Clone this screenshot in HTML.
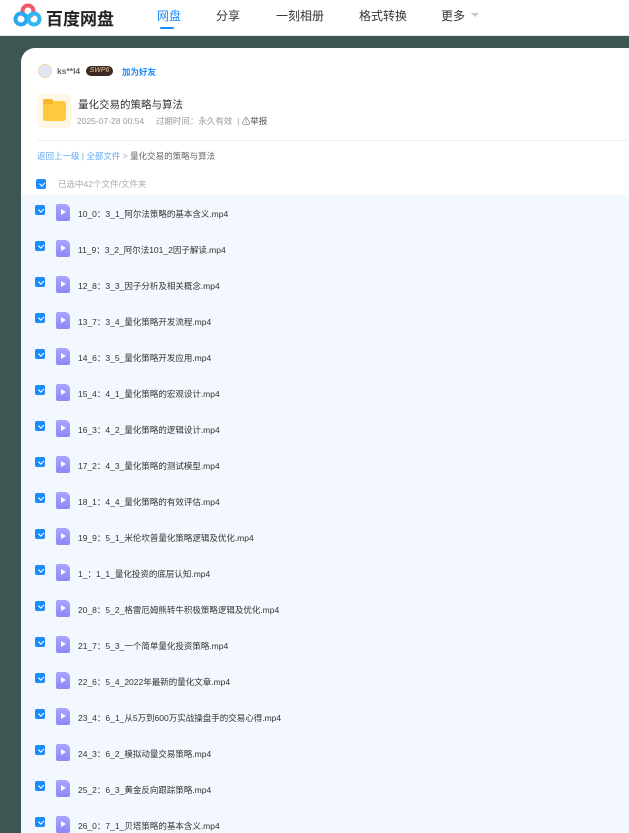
<!DOCTYPE html>
<html><head><meta charset="utf-8"><style>
*{margin:0;padding:0;box-sizing:border-box}
html,body{width:629px;height:833px;overflow:hidden}
body{background:#3d5653;font-family:"Liberation Sans","Noto Sans CJK SC",sans-serif;position:relative}
.hdr{position:absolute;left:0;top:0;width:629px;height:36px;background:#fff;border-bottom:1px solid #dde3ea}
.nav{position:absolute;top:7px;font-size:12px;color:#333}
.card{position:absolute;left:21px;top:48px;width:608px;height:785px;background:#fff;border-radius:14px 0 0 0;overflow:hidden}
.t{position:absolute;white-space:nowrap}
.cb{position:absolute;width:10px;height:10px;border-radius:2px;background:#1a8cff}
.cb:after{content:"";position:absolute;width:4px;height:2.5px;border-left:1.5px solid #fff;border-bottom:1.5px solid #fff;transform:rotate(-45deg);transform-origin:0 0;top:4.5px;left:2.5px}
.row{position:absolute;left:0;width:620px;height:36px}
.ic{position:absolute;left:35px;top:9px;width:14px;height:17px;background:linear-gradient(#a9a6ff,#8d87f7);border-radius:2px 5px 2px 2px}
.ic:after{content:"";position:absolute;left:5px;top:5px;border-left:5px solid #fff;border-top:3.5px solid transparent;border-bottom:3.5px solid transparent}
.nm{position:absolute;left:57px;top:13px;font-size:8.5px;color:#333;white-space:nowrap}
</style></head><body>
<div class="hdr">
<svg style="position:absolute;left:13px;top:3px" width="30" height="24" viewBox="0 0 30 24"><circle cx="15" cy="8" r="5.5" fill="none" stroke="#ef5b6a" stroke-width="4"/><circle cx="8" cy="16" r="5.5" fill="none" stroke="#2aa6f0" stroke-width="4"/><circle cx="21" cy="16" r="5.5" fill="none" stroke="#30b7f2" stroke-width="4"/></svg>
<div class="t" style="left:46px;top:5px;font-size:17px;font-weight:bold;color:#222">百度网盘</div>
<div class="nav" style="left:157px;color:#1a8cff">网盘</div>
<div style="position:absolute;left:160px;top:27px;width:14px;height:2px;background:#1a8cff;border-radius:1px"></div>
<div class="nav" style="left:216px">分享</div>
<div class="nav" style="left:276px">一刻相册</div>
<div class="nav" style="left:359px">格式转换</div>
<div class="nav" style="left:441px">更多</div>
<div style="position:absolute;left:471px;top:13px;border-top:4px solid #c8c8c8;border-left:4px solid transparent;border-right:4px solid transparent"></div>
</div>
<div class="card">
<div style="position:absolute;left:17px;top:16px;width:14px;height:14px;border-radius:50%;background:#dfe6f5;border:1px solid #f0d9a8"></div>
<div class="t" style="left:36px;top:18px;font-size:8.5px;color:#666;font-weight:bold">ks**l4</div>
<div class="t" style="left:65px;top:18px;height:10px;width:27px;border-radius:5px;background:#3a2a22;color:#e7c9a5;font-size:7px;font-style:italic;text-align:center;line-height:10px">SWP6</div>
<div class="t" style="left:101px;top:18px;font-size:8.5px;color:#1a8cff;font-weight:bold">加为好友</div>
<div style="position:absolute;left:17px;top:46px;width:33px;height:34px;background:#fff6e3;border-radius:4px"></div>
<div style="position:absolute;left:22px;top:53px;width:23px;height:20px;background:#ffc93d;border-radius:3px"></div>
<div style="position:absolute;left:22px;top:51px;width:10px;height:5px;background:#f7b52a;border-radius:2px 2px 0 0"></div>
<div class="t" style="left:57px;top:49px;font-size:10.5px;color:#333">量化交易的策略与算法</div>
<div class="t" style="left:56px;top:67px;font-size:8.5px;color:#999">2025-07-28 00:54 &nbsp;&nbsp;&nbsp; 过期时间：永久有效 &nbsp;| <span style="color:#555">⚠举报</span></div>
<div style="position:absolute;left:16px;top:92px;width:604px;height:1px;background:#eef0f3"></div>
<div class="t" style="left:16px;top:102px;font-size:8.5px;color:#5ea8f5">返回上一级 | 全部文件 <span style="color:#aaa">&gt;</span> <span style="color:#666">量化交易的策略与算法</span></div>
<div class="cb" style="left:15px;top:131px"></div>
<div class="t" style="left:37px;top:130px;font-size:8.5px;color:#aaa">已选中42个文件/文件夹</div>
<div style="position:absolute;left:0;top:147px;width:620px;height:660px;background:#f2f8fe">
<div class="row" style="top:0"><div class="cb" style="left:14px;top:10px"></div><div class="ic"></div><div class="nm">10_0：3_1_阿尔法策略的基本含义.mp4</div></div>
<div class="row" style="top:36px"><div class="cb" style="left:14px;top:10px"></div><div class="ic"></div><div class="nm">11_9：3_2_阿尔法101_2因子解读.mp4</div></div>
<div class="row" style="top:72px"><div class="cb" style="left:14px;top:10px"></div><div class="ic"></div><div class="nm">12_8：3_3_因子分析及相关概念.mp4</div></div>
<div class="row" style="top:108px"><div class="cb" style="left:14px;top:10px"></div><div class="ic"></div><div class="nm">13_7：3_4_量化策略开发流程.mp4</div></div>
<div class="row" style="top:144px"><div class="cb" style="left:14px;top:10px"></div><div class="ic"></div><div class="nm">14_6：3_5_量化策略开发应用.mp4</div></div>
<div class="row" style="top:180px"><div class="cb" style="left:14px;top:10px"></div><div class="ic"></div><div class="nm">15_4：4_1_量化策略的宏观设计.mp4</div></div>
<div class="row" style="top:216px"><div class="cb" style="left:14px;top:10px"></div><div class="ic"></div><div class="nm">16_3：4_2_量化策略的逻辑设计.mp4</div></div>
<div class="row" style="top:252px"><div class="cb" style="left:14px;top:10px"></div><div class="ic"></div><div class="nm">17_2：4_3_量化策略的测试模型.mp4</div></div>
<div class="row" style="top:288px"><div class="cb" style="left:14px;top:10px"></div><div class="ic"></div><div class="nm">18_1：4_4_量化策略的有效评估.mp4</div></div>
<div class="row" style="top:324px"><div class="cb" style="left:14px;top:10px"></div><div class="ic"></div><div class="nm">19_9：5_1_米伦坎普量化策略逻辑及优化.mp4</div></div>
<div class="row" style="top:360px"><div class="cb" style="left:14px;top:10px"></div><div class="ic"></div><div class="nm">1_：1_1_量化投资的底层认知.mp4</div></div>
<div class="row" style="top:396px"><div class="cb" style="left:14px;top:10px"></div><div class="ic"></div><div class="nm">20_8：5_2_格雷厄姆熊转牛积极策略逻辑及优化.mp4</div></div>
<div class="row" style="top:432px"><div class="cb" style="left:14px;top:10px"></div><div class="ic"></div><div class="nm">21_7：5_3_一个简单量化投资策略.mp4</div></div>
<div class="row" style="top:468px"><div class="cb" style="left:14px;top:10px"></div><div class="ic"></div><div class="nm">22_6：5_4_2022年最新的量化文章.mp4</div></div>
<div class="row" style="top:504px"><div class="cb" style="left:14px;top:10px"></div><div class="ic"></div><div class="nm">23_4：6_1_从5万到600万实战操盘手的交易心得.mp4</div></div>
<div class="row" style="top:540px"><div class="cb" style="left:14px;top:10px"></div><div class="ic"></div><div class="nm">24_3：6_2_模拟动量交易策略.mp4</div></div>
<div class="row" style="top:576px"><div class="cb" style="left:14px;top:10px"></div><div class="ic"></div><div class="nm">25_2：6_3_黄金反向跟踪策略.mp4</div></div>
<div class="row" style="top:612px"><div class="cb" style="left:14px;top:10px"></div><div class="ic"></div><div class="nm">26_0：7_1_贝塔策略的基本含义.mp4</div></div>
</div>
</div>
</body></html>
